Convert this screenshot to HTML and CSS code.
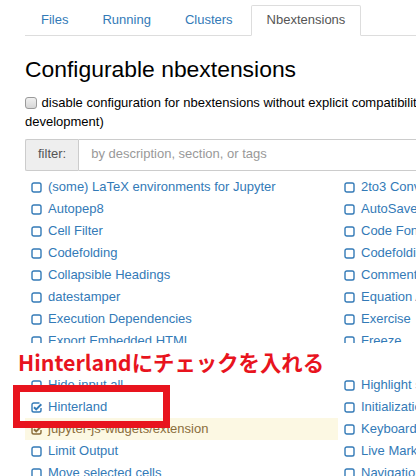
FILE: index.html
```html
<!DOCTYPE html>
<html lang="ja">
<head>
<meta charset="utf-8">
<title>Configurable nbextensions</title>
<link rel="stylesheet" href="styles.css">
</head>
<body>
<div class="page">
  <ul class="tabs">
    <li class="tab"><a>Files</a></li>
    <li class="tab"><a>Running</a></li>
    <li class="tab"><a>Clusters</a></li>
    <li class="tab active"><a>Nbextensions</a></li>
  </ul>

  <h3 class="title">Configurable nbextensions</h3>

  <label class="compat"><input type="checkbox" class="native-check"> disable configuration for nbextensions without explicit compatibility (they may break your notebook environment, but can be useful to show for nbextension<br>development)</label>

  <div class="filter">
    <span class="addon">filter:</span>
    <input class="filter-input" type="text" placeholder="by description, section, or tags">
  </div>

  <ul class="ext-list">
    <li class="ext"><svg class="box" viewBox="0 0 11 11"><rect x="1" y="1" width="9" height="9" rx="1.8"/></svg>(some) LaTeX environments for Jupyter</li>
    <li class="ext"><svg class="box" viewBox="0 0 11 11"><rect x="1" y="1" width="9" height="9" rx="1.8"/></svg>2to3 Converter</li>
    <li class="ext"><svg class="box" viewBox="0 0 11 11"><rect x="1" y="1" width="9" height="9" rx="1.8"/></svg>Autopep8</li>
    <li class="ext"><svg class="box" viewBox="0 0 11 11"><rect x="1" y="1" width="9" height="9" rx="1.8"/></svg>AutoSaveTime</li>
    <li class="ext"><svg class="box" viewBox="0 0 11 11"><rect x="1" y="1" width="9" height="9" rx="1.8"/></svg>Cell Filter</li>
    <li class="ext"><svg class="box" viewBox="0 0 11 11"><rect x="1" y="1" width="9" height="9" rx="1.8"/></svg>Code Font Size</li>
    <li class="ext"><svg class="box" viewBox="0 0 11 11"><rect x="1" y="1" width="9" height="9" rx="1.8"/></svg>Codefolding</li>
    <li class="ext"><svg class="box" viewBox="0 0 11 11"><rect x="1" y="1" width="9" height="9" rx="1.8"/></svg>Codefolding in Editor</li>
    <li class="ext"><svg class="box" viewBox="0 0 11 11"><rect x="1" y="1" width="9" height="9" rx="1.8"/></svg>Collapsible Headings</li>
    <li class="ext"><svg class="box" viewBox="0 0 11 11"><rect x="1" y="1" width="9" height="9" rx="1.8"/></svg>Comment/Uncomment Hotkey</li>
    <li class="ext"><svg class="box" viewBox="0 0 11 11"><rect x="1" y="1" width="9" height="9" rx="1.8"/></svg>datestamper</li>
    <li class="ext"><svg class="box" viewBox="0 0 11 11"><rect x="1" y="1" width="9" height="9" rx="1.8"/></svg>Equation Auto Numbering</li>
    <li class="ext"><svg class="box" viewBox="0 0 11 11"><rect x="1" y="1" width="9" height="9" rx="1.8"/></svg>Execution Dependencies</li>
    <li class="ext"><svg class="box" viewBox="0 0 11 11"><rect x="1" y="1" width="9" height="9" rx="1.8"/></svg>Exercise</li>
    <li class="ext"><svg class="box" viewBox="0 0 11 11"><rect x="1" y="1" width="9" height="9" rx="1.8"/></svg>Export Embedded HTML</li>
    <li class="ext"><svg class="box" viewBox="0 0 11 11"><rect x="1" y="1" width="9" height="9" rx="1.8"/></svg>Freeze</li>
    <li class="ext"><svg class="box" viewBox="0 0 11 11"><rect x="1" y="1" width="9" height="9" rx="1.8"/></svg>Gist-it</li>
    <li class="ext"><svg class="box" viewBox="0 0 11 11"><rect x="1" y="1" width="9" height="9" rx="1.8"/></svg>Hide Header</li>
    <li class="ext"><svg class="box" viewBox="0 0 11 11"><rect x="1" y="1" width="9" height="9" rx="1.8"/></svg>Hide input all</li>
    <li class="ext"><svg class="box" viewBox="0 0 11 11"><rect x="1" y="1" width="9" height="9" rx="1.8"/></svg>Highlight selected word</li>
    <li class="ext"><svg class="box" viewBox="0 0 11 11"><path class="open" d="M8.5 1H2.8A1.8 1.8 0 0 0 1 2.8v5.4A1.8 1.8 0 0 0 2.8 10h5.4A1.8 1.8 0 0 0 10 8.2V6"/><path class="tick" d="M3 5.2l2.2 2.2L10.3 2.2"/></svg>Hinterland</li>
    <li class="ext"><svg class="box" viewBox="0 0 11 11"><rect x="1" y="1" width="9" height="9" rx="1.8"/></svg>Initialization cells</li>
    <li class="ext warn"><svg class="box" viewBox="0 0 11 11"><path class="open" d="M8.5 1H2.8A1.8 1.8 0 0 0 1 2.8v5.4A1.8 1.8 0 0 0 2.8 10h5.4A1.8 1.8 0 0 0 10 8.2V6"/><path class="tick" d="M3 5.2l2.2 2.2L10.3 2.2"/></svg>jupyter-js-widgets/extension</li>
    <li class="ext"><svg class="box" viewBox="0 0 11 11"><rect x="1" y="1" width="9" height="9" rx="1.8"/></svg>Keyboard shortcut editor</li>
    <li class="ext"><svg class="box" viewBox="0 0 11 11"><rect x="1" y="1" width="9" height="9" rx="1.8"/></svg>Limit Output</li>
    <li class="ext"><svg class="box" viewBox="0 0 11 11"><rect x="1" y="1" width="9" height="9" rx="1.8"/></svg>Live Markdown Preview</li>
    <li class="ext"><svg class="box" viewBox="0 0 11 11"><rect x="1" y="1" width="9" height="9" rx="1.8"/></svg>Move selected cells</li>
    <li class="ext"><svg class="box" viewBox="0 0 11 11"><rect x="1" y="1" width="9" height="9" rx="1.8"/></svg>Navigation-Hotkeys</li>
  </ul>
</div>

<div class="note">Hinterlandにチェックを入れる</div>
<div class="mark"></div>
</body>
</html>
```

FILE: styles.css
```css
html, body {
  margin: 0;
  padding: 0;
  overflow: hidden;
  background: #fff;
}

body {
  font-family: "Liberation Sans", Arial, sans-serif;
  font-size: 13px;
  line-height: 1.42857;
  color: #000;
  position: relative;
  width: 416px;
  height: 476px;
}

.page {
  width: 1000px;
  padding: 5px 0 0 25px;
}

/* tabs */
.tabs {
  list-style: none;
  margin: 0;
  padding: 0;
  display: flex;
  border-bottom: 1px solid #ddd;
}

.tab {
  margin-right: 2px;
  margin-bottom: -1px;
}

.tab a {
  display: block;
  padding: 5px 15px;
  border: 1px solid transparent;
  border-radius: 2px 2px 0 0;
  color: #337ab7;
}

.tab.active a {
  color: #555;
  background: #fff;
  border-color: #ddd #ddd transparent;
}

/* heading */
.title {
  font-size: 22.9px;
  font-weight: normal;
  line-height: 1.1;
  margin: 21.5px 0 0;
  color: #000;
}

/* compat checkbox */
.compat {
  display: block;
  margin-top: 11.7px;
  color: #000;
}

.native-check {
  -webkit-appearance: none;
  appearance: none;
  width: 12px;
  height: 12px;
  margin: 0 1px 0 0;
  vertical-align: -2px;
  border: 1px solid #9a9a9a;
  border-radius: 3px;
  background: linear-gradient(#f0f0f0, #d6d6d6);
  box-sizing: border-box;
}

/* filter */
.filter {
  display: flex;
  margin-top: 7.5px;
  height: 32px;
}

.addon {
  display: flex;
  align-items: center;
  padding: 0 12px;
  background: #eee;
  border: 1px solid #ccc;
  border-right: 0;
  border-radius: 2px 0 0 2px;
  color: #555;
}

.filter-input {
  flex: 1;
  font: inherit;
  padding: 0 12px;
  border: 1px solid #ccc;
  border-radius: 0 2px 2px 0;
  color: #555;
  outline: none;
}

.filter-input::placeholder {
  color: #999;
}

/* extension list */
.ext-list {
  list-style: none;
  margin: 5.5px 0 0;
  padding: 0;
  display: grid;
  grid-template-columns: 313px 313px;
}

.ext {
  display: flex;
  align-items: center;
  height: 22px;
  line-height: 22px;
  padding-left: 6px;
  color: #337ab7;
  white-space: nowrap;
}

.ext.warn {
  background: #fcf8e3;
  color: #8a6d3b;
}

.box {
  width: 11px;
  height: 11px;
  margin-right: 6px;
  flex: none;
}

.box rect,
.box .open {
  fill: none;
  stroke: currentColor;
  stroke-width: 1.4;
}

.box .tick {
  fill: none;
  stroke: currentColor;
  stroke-width: 2;
  stroke-linejoin: miter;
}

/* annotation overlay */
.note {
  position: absolute;
  left: 0;
  right: 0;
  top: 343px;
  height: 37px;
  background: #fff;
  padding-left: 18px;
  box-sizing: border-box;
  font-family: "Noto Sans CJK JP", "Noto Sans", sans-serif;
  font-weight: bold;
  font-size: 21.4px;
  line-height: 37px;
  color: #e8141e;
  white-space: nowrap;
}

.mark {
  position: absolute;
  left: 13px;
  top: 385px;
  width: 157px;
  height: 43px;
  border: 7px solid #e8141e;
  box-sizing: border-box;
}
```
